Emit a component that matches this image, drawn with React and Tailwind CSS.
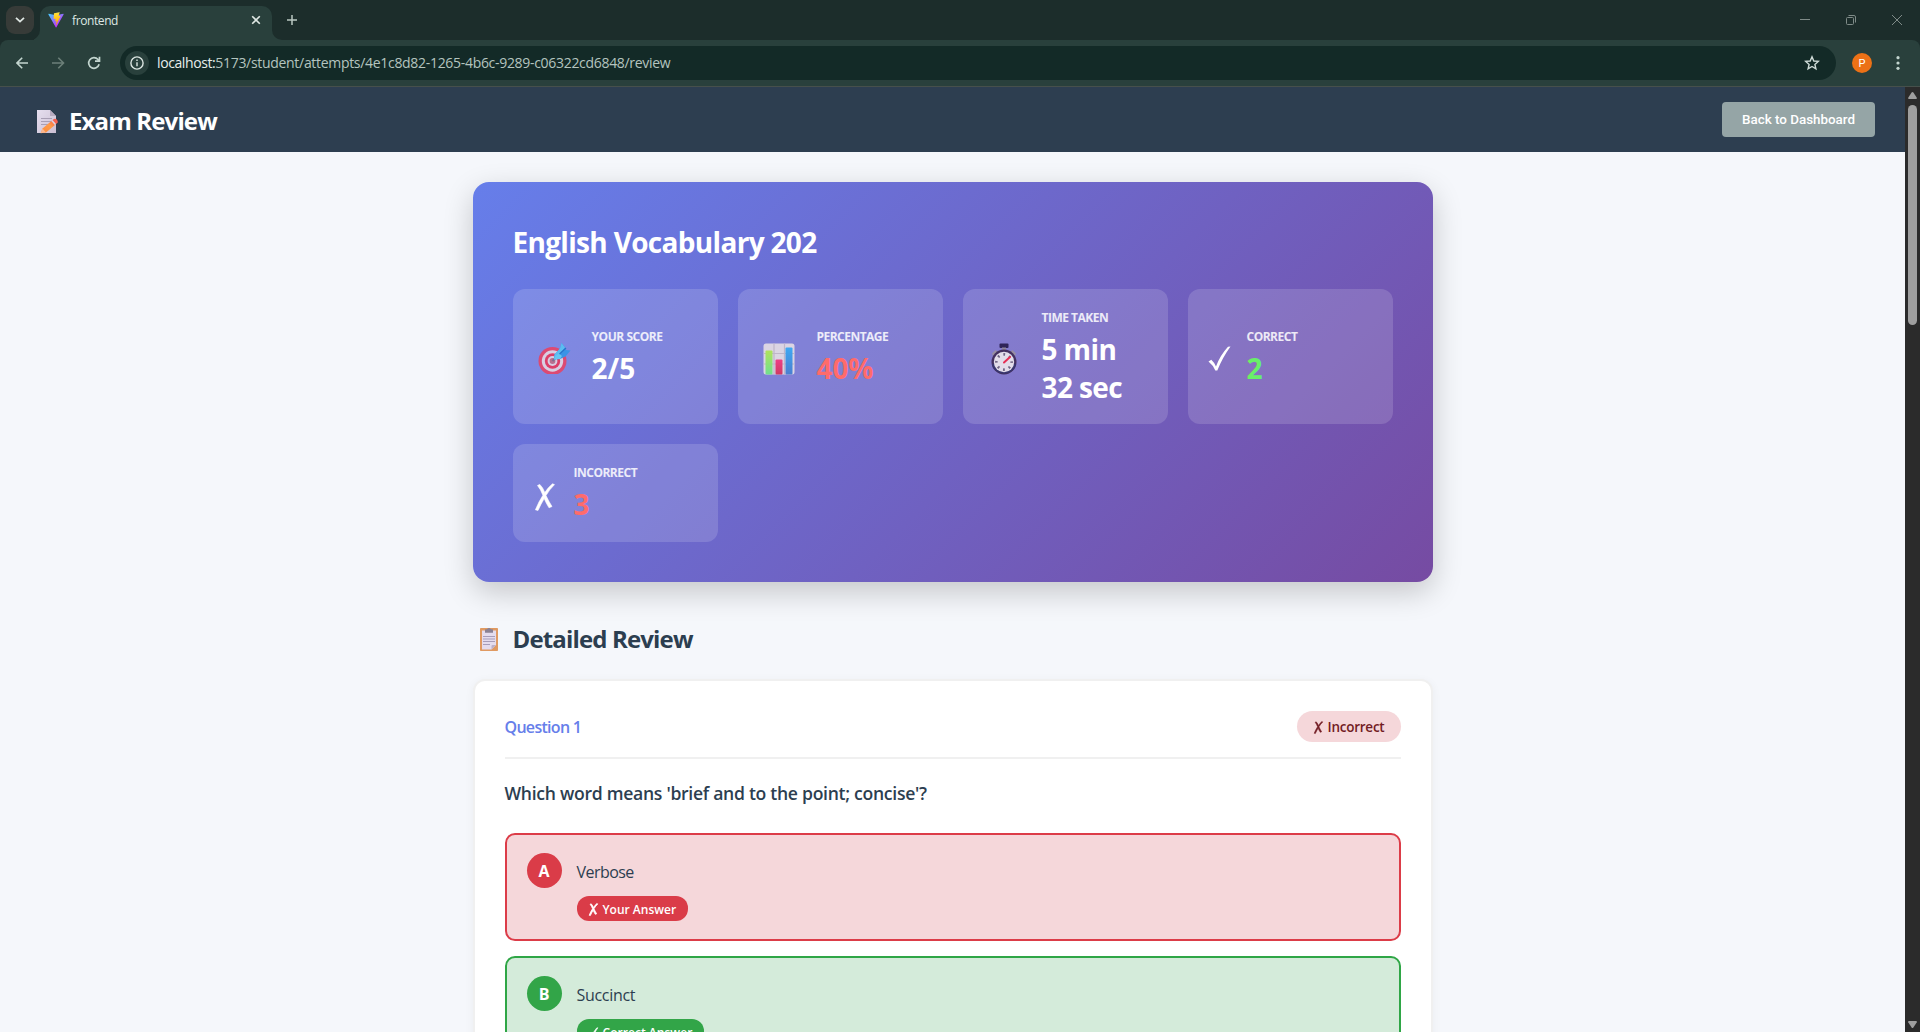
import React from "react";

function ViteLogo() {
  return (
    <svg width="16" height="16" viewBox="0 0 410 404" fill="none">
      <defs>
        <linearGradient id="vt1" x1="6" y1="33" x2="235" y2="344" gradientUnits="userSpaceOnUse">
          <stop stopColor="#41D1FF" />
          <stop offset="1" stopColor="#BD34FE" />
        </linearGradient>
        <linearGradient id="vt2" x1="194" y1="9" x2="236" y2="292" gradientUnits="userSpaceOnUse">
          <stop stopColor="#FFEA83" />
          <stop offset="0.08" stopColor="#FFDD35" />
          <stop offset="1" stopColor="#FFA800" />
        </linearGradient>
      </defs>
      <path fill="url(#vt1)" d="M399.6 59.5 215.6 388.5c-3.8 6.8-13.5 6.8-17.4.1L10.6 59.6C6.4 52.2 12.7 43.3 21 44.8l184.2 32.9c1.2.2 2.4.2 3.5 0l180.4-32.9c8.3-1.5 14.7 7.3 10.5 14.7z" />
      <path fill="url(#vt2)" d="M293 1.6 156.800 28.2c-2.200.4-3.900 2.300-4 4.600l-8.400 141.400c-.2 3.300 2.900 5.900 6.100 5.200l37.900-8.700c3.600-.8 6.800 2.300 6 5.900l-11.300 55.100c-.8 3.700 2.700 6.900 6.300 5.800l23.400-7.100c3.600-1.100 7.100 2.100 6.300 5.800l-17.900 86.600c-1.100 5.400 6.100 8.400 9.100 3.700l2-3.100 110.900-221.300c1.900-3.700-1.300-7.900-5.400-7.100l-39 7.500c-3.700.7-6.800-2.700-5.800-6.300L298.700 7.900c1-3.600-2.100-7.100-5.700-6.300z" />
    </svg>
  );
}

function Memo() {
  return (
    <svg width="22" height="25" viewBox="0 0 22 25">
      <defs>
        <linearGradient id="memo" x1="0" y1="0" x2="1" y2="1">
          <stop stopColor="#e6dfef" />
          <stop offset="1" stopColor="#cbbfd3" />
        </linearGradient>
        <linearGradient id="pencil" x1="0" y1="1" x2="1" y2="0">
          <stop stopColor="#fb8a3c" />
          <stop offset="0.6" stopColor="#ff9b48" />
          <stop offset="1" stopColor="#f4644d" />
        </linearGradient>
      </defs>
      <path d="M0 1h13l6 6v17H0z" fill="url(#memo)" />
      <path d="M13 1v6h6z" fill="#b7abc0" />
      <path d="M4 9.500h11M4 12.500h10M4 15.500h7" stroke="#a99fb5" strokeWidth="1" />
      <path d="M3.800 24 5.500 19.500 15 11.500l3.500 4L9 23.500z" fill="url(#pencil)" />
      <path d="M15 11.500 17 10q1.500-.8 2.800.6t1 2.900L18.500 15.500z" fill="#f4604f" />
      <path d="M14.300 12.100 15.500 11l3.500 4-1.200 1z" fill="#dcd5e4" />
      <path d="M3.600 24.200 5.500 19.600 9 23.500z" fill="#fbb890" />
    </svg>
  );
}

function Target() {
  return (
    <svg width="33" height="31" viewBox="0 0 33 31">
      <circle cx="14.500" cy="18" r="14" fill="#dc4a72" />
      <circle cx="14.500" cy="18" r="10.700" fill="#d9cfe2" />
      <circle cx="14.500" cy="18" r="7.700" fill="#dc3f68" />
      <circle cx="14.500" cy="18" r="4.900" fill="#d9cfe2" />
      <circle cx="14.500" cy="18" r="2.900" fill="#b8708f" />
      <path d="M14.500 18 20 12.500" stroke="#7c6f8e" strokeWidth="2" />
      <path d="M16 16.500 16.500 11.500 22 5.500 23.500 0l3.500 4.500L28 7l4.500.5-5 6-5.500 2.500z" fill="#3a94e6" />
      <path d="M16 16.500 16.500 11.500 22 5.500 23.500 0l3.500 4.500-5 6z" fill="#5cbcf0" />
      <path d="M16 16.500 17.500 13 21 10.500 24 13l-2 3z" fill="#66c6f2" />
      <path d="M21.500 11 28 5" stroke="#2673c9" strokeWidth="1.100" />
    </svg>
  );
}

function BarChart() {
  return (
    <svg width="32" height="32" viewBox="0 0 32 32">
      <defs>
        <linearGradient id="bg1" x1="0" y1="0" x2="0" y2="1">
          <stop stopColor="#b0e25c" />
          <stop offset="1" stopColor="#6fe08f" />
        </linearGradient>
        <linearGradient id="bg2" x1="0" y1="0" x2="0" y2="1">
          <stop stopColor="#ef3f86" />
          <stop offset="1" stopColor="#cf3a63" />
        </linearGradient>
        <linearGradient id="bg3" x1="0" y1="0" x2="0" y2="1">
          <stop stopColor="#3fa9f3" />
          <stop offset="1" stopColor="#4a7ed0" />
        </linearGradient>
      </defs>
      <rect x="0.500" y="0.500" width="31" height="31" rx="2.500" fill="#dbd5e3" />
      <path d="M11 0.500v31M21.500 0.500v31M.5 10.500h31M.5 21h31" stroke="#bfb6c9" strokeWidth="1.200" />
      <rect x="2.500" y="7.500" width="7" height="24" rx="1" fill="url(#bg1)" />
      <rect x="12.500" y="16.500" width="7" height="15" rx="1" fill="url(#bg2)" />
      <rect x="22.500" y="4.500" width="7" height="27" rx="1" fill="url(#bg3)" />
    </svg>
  );
}

function Stopwatch() {
  return (
    <svg width="26" height="32" viewBox="0 0 26 32">
      <path d="M1 10.500 4.500 7l2.500 2L2 13zM25 10.500 21.500 7 19 9l5 4z" fill="#988fa3" />
      <rect x="8.500" y="0.500" width="9" height="4.500" rx="1" fill="#2f2458" />
      <rect x="11" y="4.500" width="4" height="4" fill="#8f869b" />
      <circle cx="13" cy="19" r="12.500" fill="#43305f" />
      <path d="M.8 21a12.500 12.500 0 0 0 24.400 0z" fill="#38366f" />
      <circle cx="13" cy="19" r="10.200" fill="#e3ddea" />
      <circle cx="13" cy="19" r="7.600" fill="none" stroke="#6f6483" strokeWidth="2.600" strokeDasharray="1.800 4.169" strokeDashoffset="0.900" />
      <path d="M13 19.500 19 14" stroke="#e62f55" strokeWidth="2" strokeLinecap="round" />
    </svg>
  );
}

function CheckIcon({ w, h, bold = 0 }) {
  return (
    <svg width={w} height={h} viewBox="0 0 23 25" className="shrink-0 overflow-visible">
      <path d="M.5 15.500 3.300 13.800Q6.300 16.500 8 20.500 12 9.500 20 .8L22.500.5Q14.500 11.500 9.300 24.500H7.300Q5 19 .5 15.500z" fill="currentColor" stroke="currentColor" strokeWidth={bold} />
    </svg>
  );
}

function CrossIcon({ w, h, bold = 0 }) {
  return (
    <svg width={w} height={h} viewBox="0 0 20 28" className="shrink-0 overflow-visible">
      <path d="M2.500 2.500 4.800 1.400Q8 4.500 9.800 9.500 13.500 4 17.500.8l2 .8Q14.500 6.500 11 12.500 13.500 18 17 23.500L14 24.800Q11 20 9.200 15.600 6 21 3 27.500L.4 26.800Q3.800 18.500 7.900 12.300 5.800 6.500 2.500 2.500z" fill="currentColor" stroke="currentColor" strokeWidth={bold} />
    </svg>
  );
}

function Clipboard() {
  return (
    <svg width="18" height="23" viewBox="0 0 18 23">
      <rect width="18" height="23" rx="0.800" fill="#e09a62" />
      <path d="M2 2.500h14V17l-4.500 4.500H2z" fill="#e4dcee" />
      <path d="M11.500 21.500 16 17h-3.500q-1 0-1 1z" fill="#bbb0c9" />
      <path d="M5 1.800q0-.6.600-.6h1.600q.3-1.200 1.800-1.200t1.800 1.200h1.600q.6 0 .6.600v3H5z" fill="#8a8194" />
      <path d="M3 8.500h12M3 11h12M3 13.500h12M3 16.500h7" stroke="#a79dba" strokeWidth="1" />
    </svg>
  );
}

function BrowserChrome() {
  return (
    <div className="w-full shrink-0 bg-[#1c2d2b]">
      <div className="flex h-10 items-start">
        <div className="ml-1.5 mt-1.5 flex h-7 w-7 items-center justify-center rounded-[9px] bg-[#373b38]">
          <svg width="10" height="6" viewBox="0 0 10 6" fill="none" stroke="#dfe6e3" strokeWidth="1.800">
            <path d="M1 0.800 5 4.600 9 0.800" />
          </svg>
        </div>
        <div className="flex h-10 items-end">
          <div className="h-2.5 w-1.5 overflow-hidden">
            <div className="-ml-3.5 -mt-2.5 h-5 w-5 rounded-full shadow-[0_0_0_10px_#29403c]" />
          </div>
          <div className="flex h-[34px] w-[232px] items-center rounded-t-[10px] bg-[#29403c] pb-1.5 pl-2 pr-[11px]">
            <ViteLogo />
            <span className="ml-2 grow pt-[2px] text-[12px] leading-4 tracking-[-0.4px] text-[#dfe8e4]">frontend</span>
            <svg width="10" height="10" viewBox="0 0 10 10" stroke="#dfe8e4" strokeWidth="1.600">
              <path d="M1.200 1.200 8.800 8.800M8.800 1.200 1.200 8.800" />
            </svg>
          </div>
          <div className="h-2.5 w-2.5 overflow-hidden">
            <div className="-mt-2.5 h-5 w-5 rounded-full shadow-[0_0_0_10px_#29403c]" />
          </div>
        </div>
        <svg className="ml-[5px] mt-[15px]" width="10" height="10" viewBox="0 0 10 10" stroke="#b9c7c2" strokeWidth="1.500">
          <path d="M5 0v10M0 5h10" />
        </svg>
        <div className="grow" />
        <div className="mr-[18px] mt-[15px] flex gap-9 text-[#7f8b88]">
          <svg width="10" height="10" viewBox="0 0 10 10" stroke="currentColor">
            <path d="M0 4.500h10" />
          </svg>
          <svg width="10" height="10" viewBox="0 0 10 10" fill="none" stroke="currentColor">
            <rect x="0.500" y="2.500" width="7" height="7" rx="1" />
            <path d="M2.500.5H8a1.500 1.500 0 0 1 1.500 1.500v5.500" />
          </svg>
          <svg width="10" height="10" viewBox="0 0 10 10" stroke="currentColor">
            <path d="M0 0 10 10M10 0 0 10" />
          </svg>
        </div>
      </div>
      <div className="flex h-[47px] items-center rounded-t-[8px] border-b border-[#46504b] bg-[#29403c] pl-4">
        <svg width="13" height="12" viewBox="0 0 13 12" fill="none" stroke="#c3d5cf" strokeWidth="1.600">
          <path d="M12 6H1.200M6.200.8 1 6l5.200 5.200" />
        </svg>
        <svg className="ml-[23px]" width="13" height="12" viewBox="0 0 13 12" fill="none" stroke="#6c7f79" strokeWidth="1.600">
          <path d="M0 6h11.300M6.300.8 11.500 6l-5.200 5.200" />
        </svg>
        <svg className="ml-[22px]" width="14" height="14" viewBox="0 0 14 14" fill="none" stroke="#c3d5cf" strokeWidth="1.700">
          <path d="M12.100 8.300A5.300 5.300 0 1 1 11 3.500L12.500 5M12.500.8V5.200H8" />
        </svg>
        <div className="ml-[19px] flex h-[34px] w-[1716px] items-center rounded-full bg-[#132a27] pl-[5px] pr-4">
          <div className="flex h-6 w-6 items-center justify-center rounded-full bg-[#29403c]">
            <svg width="14" height="14" viewBox="0 0 14 14" fill="none" stroke="#dbe5e1" strokeWidth="1.400">
              <circle cx="7" cy="7" r="6.100" />
              <path d="M7 6.200v4M7 3.600v1.400" />
            </svg>
          </div>
          <div className="ml-2 grow whitespace-nowrap text-[14px] leading-5 text-[#b4c4bf]">
            <span className="tracking-[-0.4px] text-[#e6eeeb]">localhost:</span>
            <span className="tracking-[-0.307px]">5173/student/attempts/4e1c8d82-1265-4b6c-9289-c06322cd6848/review</span>
          </div>
          <svg width="16" height="16" viewBox="0 0 16 16" fill="none" stroke="#d0dcd8" strokeWidth="1.400">
            <path d="M8 1.800 9.800 6l4.500.4-3.400 3 1 4.400L8 11.500l-3.900 2.300 1-4.400-3.400-3L6.200 6z" />
          </svg>
        </div>
        <div className="ml-4 flex h-5 w-5 items-center justify-center rounded-full bg-[#ec7116] font-['Roboto',sans-serif] text-[11px] leading-none text-white">P</div>
        <svg className="ml-6" width="4" height="14" viewBox="0 0 4 14" fill="#c3d5cf">
          <circle cx="2" cy="1.700" r="1.600" />
          <circle cx="2" cy="7" r="1.600" />
          <circle cx="2" cy="12.300" r="1.600" />
        </svg>
      </div>
    </div>
  );
}

function Stat({ icon, iconClass, label, labelClass, children, valueClass }) {
  return (
    <div className="flex items-center gap-4 rounded-xl bg-white/15 px-5 pb-[18px] pt-5">
      <div className={"flex shrink-0 justify-center " + iconClass}>{icon}</div>
      <div className="flex flex-col gap-1">
        <div className={"whitespace-nowrap text-[12px] font-bold leading-[18px] text-white/85 " + labelClass}>{label}</div>
        <div className={"text-[28px] font-bold leading-[37.5px] " + valueClass}>{children}</div>
      </div>
    </div>
  );
}

function Option({ letter, text, textClass, boxClass, fillClass, children }) {
  return (
    <div className={"flex h-[108px] shrink-0 gap-[15px] rounded-[10px] border-2 px-5 py-[18px] " + boxClass}>
      <div className={"flex h-[35px] w-[35px] items-center justify-center rounded-full text-[16px] font-bold text-white " + fillClass}>{letter}</div>
      <div className="flex flex-col items-start">
        <div className={"h-[43px] text-[16px] leading-[38px] text-[#2c3e50] " + textClass}>{text}</div>
        <div className={"flex h-[25px] items-center gap-[5px] whitespace-nowrap rounded-xl pl-3 pt-0.5 text-[12px] font-semibold leading-[23px] text-white " + fillClass}>{children}</div>
      </div>
    </div>
  );
}

export default function App() {
  return (
    <div className="flex h-[1032px] w-[1920px] flex-col overflow-hidden bg-[#f5f7fb] font-['Open_Sans','Noto_Sans',sans-serif]">
      <BrowserChrome />
      <div className="flex min-h-0 grow">
        <div className="flex min-w-0 grow flex-col overflow-hidden">
          <header className="flex h-[65px] shrink-0 items-center justify-between bg-[#2d3e50] pl-[37px] pr-[30px]">
            <div className="flex items-center gap-2.5">
              <div className="mt-1">
                <Memo />
              </div>
              <h1 className="pt-0.5 text-[24px] font-bold leading-8 tracking-[-0.86px] text-white">Exam Review</h1>
            </div>
            <button className="h-[35px] w-[153px] rounded-[4px] bg-[#95a5a6] pt-px font-['Roboto',sans-serif] text-[13.4px] font-medium text-white">Back to Dashboard</button>
          </header>
          <main className="flex w-[960px] flex-col self-center pt-[30px]">
            <section className="h-[400px] shrink-0 rounded-2xl bg-[linear-gradient(135deg,#667eea_0%,#764ba2_100%)] px-10 pb-10 pt-[41px] shadow-[0_10px_30px_rgba(0,0,0,0.2)]">
              <h2 className="text-[28px] font-bold leading-[38px] tracking-[-0.68px] text-white">English Vocabulary 202</h2>
              <div className="mt-7 grid grid-cols-4 grid-rows-[135px_98px] gap-5">
                <Stat icon={<Target />} iconClass="mt-0.5 w-[43px]" label="YOUR SCORE" labelClass="tracking-[-0.45px]" valueClass="tracking-[0.1px] text-white">2/5</Stat>
                <Stat icon={<BarChart />} iconClass="mt-0.5 w-[43px]" label="PERCENTAGE" labelClass="tracking-[-0.52px]" valueClass="tracking-[-0.1px] text-[#ff6b6b]">40%</Stat>
                <Stat icon={<Stopwatch />} iconClass="mt-0.5 w-[43px]" label="TIME TAKEN" labelClass="tracking-[-0.5px]" valueClass="tracking-[-0.6px] text-white">5 min<br />32 sec</Stat>
                <Stat icon={<CheckIcon w={23} h={25} />} iconClass="mt-0.5 w-[23px] text-white" label="CORRECT" labelClass="tracking-[-0.5px]" valueClass="text-[#69f069]">2</Stat>
                <Stat icon={<CrossIcon w={20} h={28} bold={0.6} />} iconClass="mt-1.5 w-[25px] text-white" label="INCORRECT" labelClass="tracking-[-0.5px]" valueClass="text-[#ff6b6b]">3</Stat>
              </div>
            </section>
            <div className="mt-[39px] flex h-9 shrink-0 items-center gap-[15px] pl-[7px]">
              <Clipboard />
              <h2 className="text-[24px] font-bold leading-9 tracking-[-0.85px] text-[#2c3e50]">Detailed Review</h2>
            </div>
            <section className="mt-[22px] flex flex-col rounded-xl border-2 border-[#f0f0f0] bg-white px-[30px] pt-[30px] shadow-[0_2px_10px_rgba(0,0,0,0.05)]">
              <div className="flex h-12 shrink-0 items-start justify-between border-b-2 border-[#f0f0f0]">
                <span className="text-[16px] font-semibold leading-[33px] tracking-[-0.7px] text-[#667eea]">Question 1</span>
                <div className="flex h-[31px] w-[104px] items-center gap-[5px] rounded-full bg-[#f5d7da] pl-[17px] pt-px text-[#721c24]">
                  <CrossIcon w={9} h={13} bold={1.2} />
                  <span className="text-[13.5px] font-semibold leading-[30px] tracking-[-0.24px]">Incorrect</span>
                </div>
              </div>
              <p className="mt-5 text-[17.6px] font-semibold leading-[28px] tracking-[-0.29px] text-[#2c3e50]">Which word means 'brief and to the point; concise'?</p>
              <div className="mt-[26px] flex flex-col gap-[15px] pb-8">
                <Option letter="A" text="Verbose" textClass="tracking-[-0.55px]" boxClass="border-[#dc3c48] bg-[#f5d7da]" fillClass="bg-[#da3c48]">
                  <CrossIcon w={9} h={13} bold={1.8} />
                  <span className="pr-3">Your Answer</span>
                </Option>
                <Option letter="B" text="Succinct" textClass="tracking-[-0.3px]" boxClass="border-[#2fa646] bg-[#d4ebda]" fillClass="bg-[#32a548]">
                  <CheckIcon w={9} h={11} bold={1.8} />
                  <span className="pr-3 tracking-[0.04px]">Correct Answer</span>
                </Option>
              </div>
            </section>
          </main>
        </div>
        <div className="flex w-[15px] shrink-0 flex-col items-center bg-[#2b2b2b] pb-1 pt-[5px]">
          <svg width="9" height="7" viewBox="0 0 9 7" fill="#9f9f9f">
            <path d="M4.500 0Q5 0 5.400.6L8.800 5.800Q9.200 7 8 7H1Q-.2 7 .2 5.800L3.600.6Q4 0 4.500 0z" />
          </svg>
          <div className="mt-1.5 h-[220px] w-[9px] rounded-full bg-[#9f9f9f]" />
          <div className="grow" />
          <svg width="9" height="7" viewBox="0 0 9 7" fill="#9f9f9f">
            <path d="M4.500 7Q5 7 5.400 6.400L8.800 1.200Q9.200 0 8 0H1Q-.2 0 .2 1.200L3.600 6.400Q4 7 4.500 7z" />
          </svg>
        </div>
      </div>
    </div>
  );
}
